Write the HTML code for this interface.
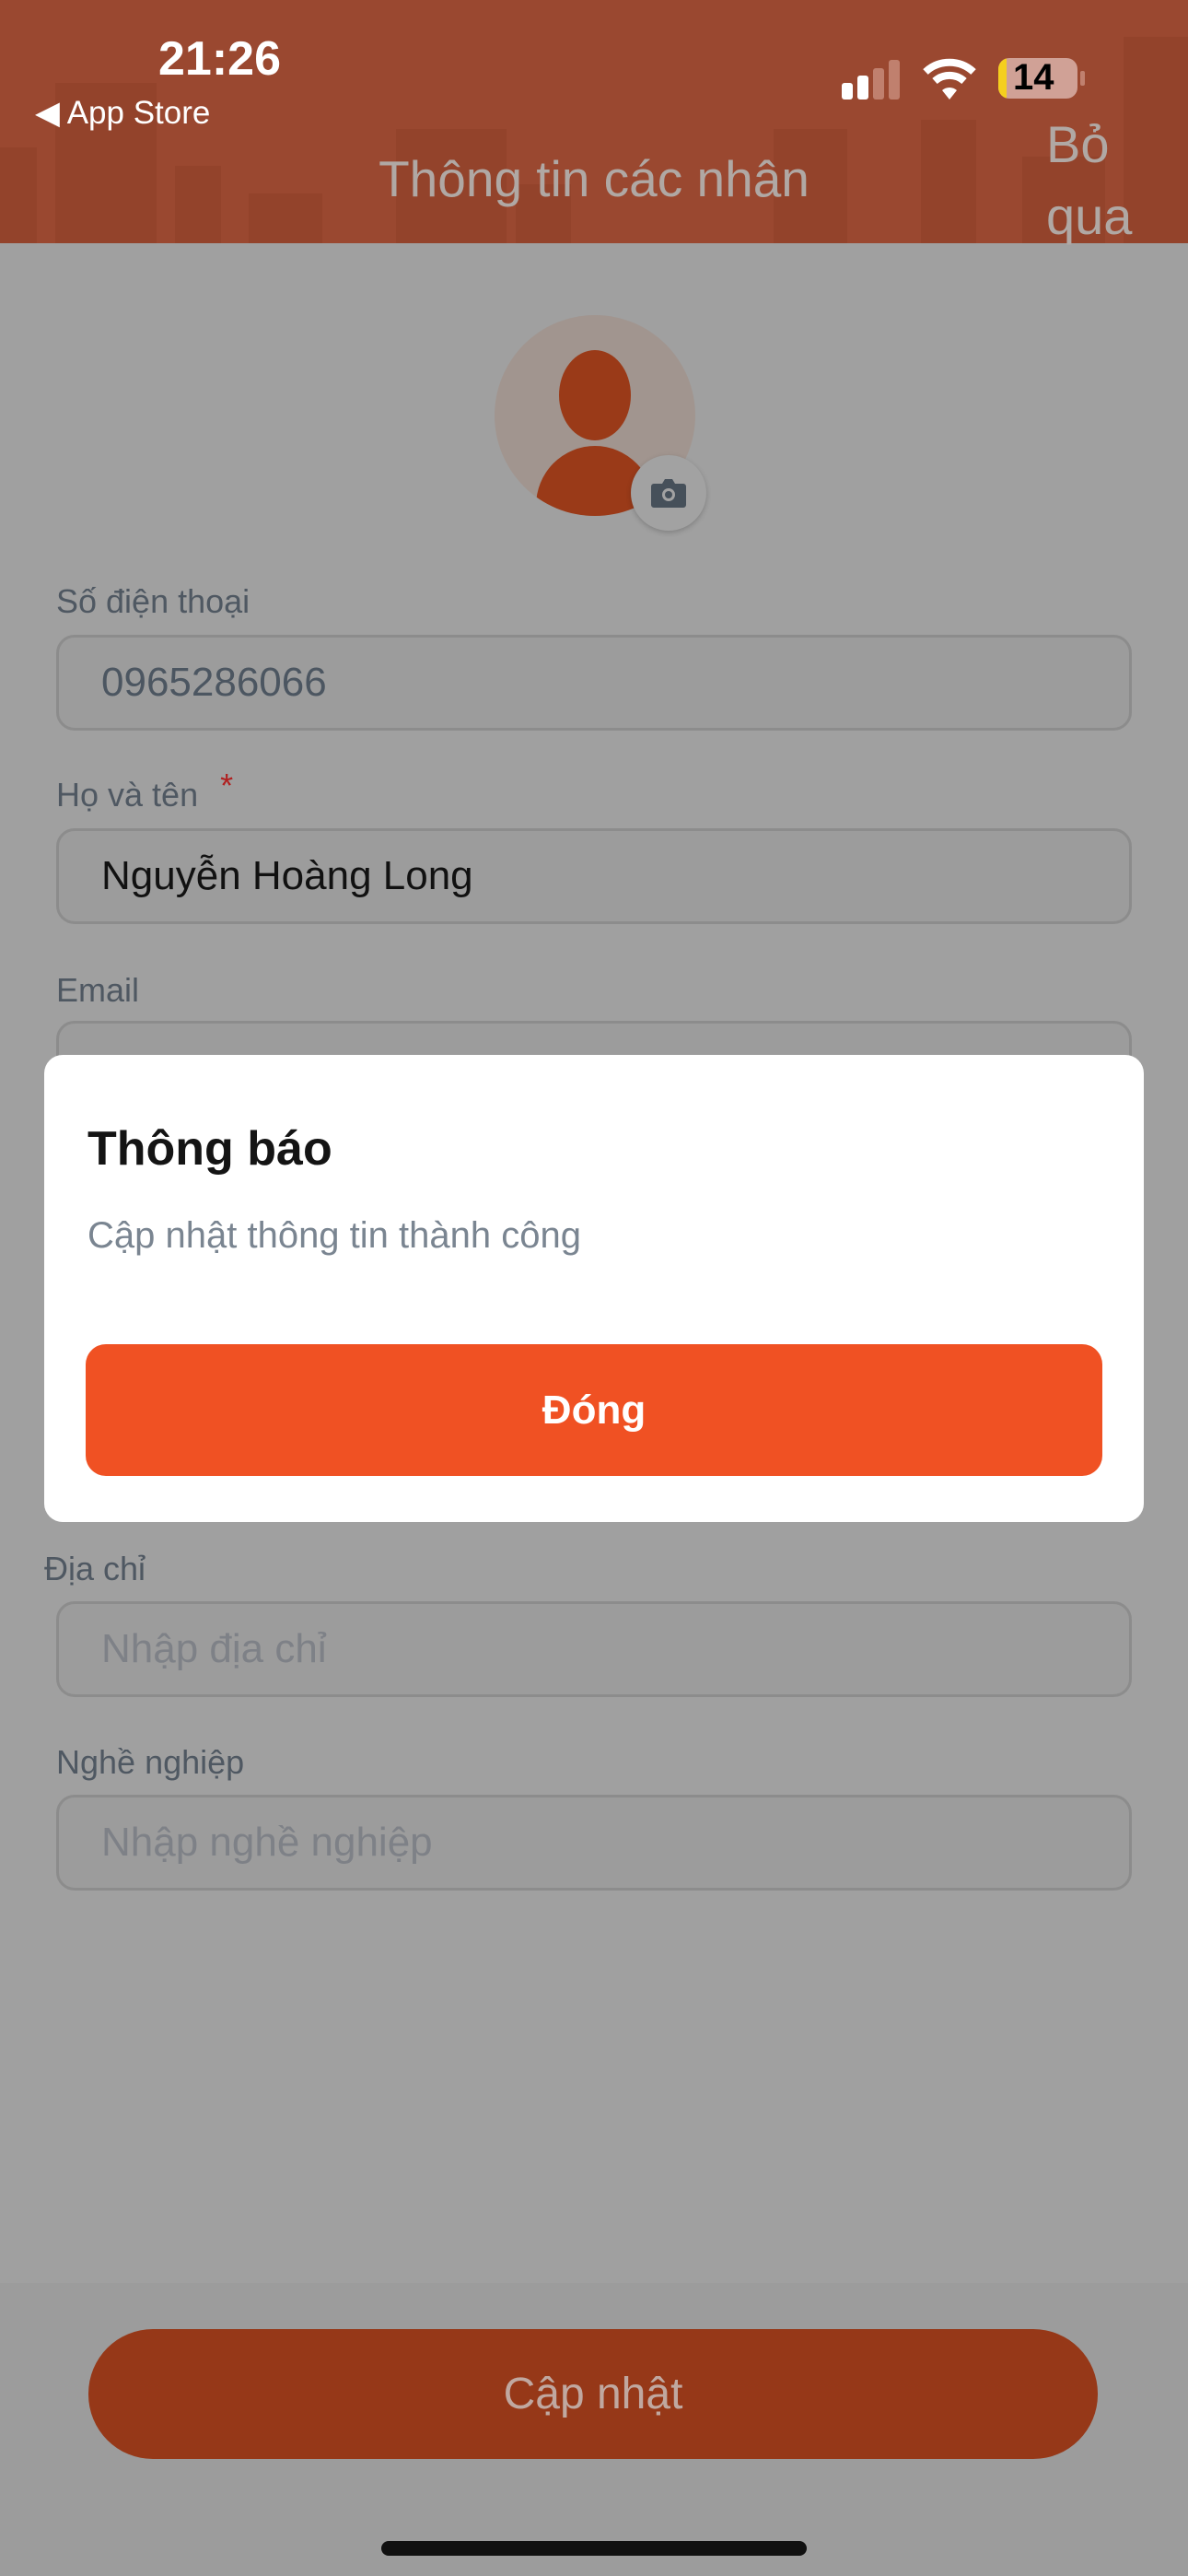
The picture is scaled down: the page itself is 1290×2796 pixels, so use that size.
<!DOCTYPE html>
<html><head><meta charset="utf-8"><style>
*{margin:0;padding:0;box-sizing:border-box}
body{width:1290px;height:2796px;background:#a0a0a0;position:relative;overflow:hidden;font-family:"Liberation Sans","DejaVu Sans",sans-serif}
.a{position:absolute;white-space:nowrap}
.hdr{position:absolute;left:0;top:0;width:1290px;height:264px;background:#9a4830}
.lbl{font-size:36px;color:#4f5862}
.inp{position:absolute;left:61px;width:1168px;height:104px;border:3px solid #8c8c8c;border-radius:20px;background:#9c9c9c}
.inp span{position:absolute;left:46px;top:50%;transform:translateY(-50%);font-size:44px;white-space:nowrap}
</style></head><body>
<div class="hdr">
 <svg width="1290" height="264" style="position:absolute;left:0;top:0" fill="#8f4129" opacity=".6">
  <rect x="0" y="160" width="40" height="104"/><rect x="60" y="90" width="110" height="174"/><rect x="190" y="180" width="50" height="84"/>
  <rect x="270" y="210" width="80" height="54"/><rect x="430" y="140" width="120" height="124"/><rect x="560" y="200" width="60" height="64"/>
  <rect x="840" y="140" width="80" height="124"/><rect x="1000" y="130" width="60" height="134"/><rect x="1110" y="170" width="90" height="94"/><rect x="1220" y="40" width="70" height="224"/>
 </svg>
 <div class="a" style="left:172px;top:34px;font-size:52px;font-weight:bold;color:#fff">21:26</div>
 <div class="a" style="left:38px;top:103px;font-size:35px;color:#fff">◀ App Store</div>
 <div style="position:absolute;left:914px;top:90px;width:12px;height:18px;background:#fff;border-radius:3px"></div>
 <div style="position:absolute;left:931px;top:82px;width:12px;height:26px;background:#fff;border-radius:3px"></div>
 <div style="position:absolute;left:948px;top:74px;width:12px;height:34px;background:#c0806e;border-radius:3px"></div>
 <div style="position:absolute;left:965px;top:65px;width:12px;height:43px;background:#c0806e;border-radius:3px"></div>
 <svg style="position:absolute;left:1002px;top:60px" width="58" height="50" viewBox="0 0 58 50"><path d="M3 18 A38 38 0 0 1 55 18" stroke="#fff" stroke-width="8" fill="none"/><path d="M13 28 A24 24 0 0 1 45 28" stroke="#fff" stroke-width="8" fill="none"/><path d="M21 38 L29 48 L37 38 A12 12 0 0 0 21 38Z" fill="#fff"/></svg>
 <div style="position:absolute;left:1084px;top:63px;width:86px;height:44px;border-radius:12px;background:#d0a196;overflow:hidden"><div style="width:9px;height:44px;background:#f5cf1e"></div></div>
 <div style="position:absolute;left:1173px;top:77px;width:5px;height:16px;background:#c0806e;border-radius:2px"></div>
 <div class="a" style="left:1100px;top:62px;font-size:40px;font-weight:bold;color:#000">14</div>
 <div class="a" style="left:0;width:1290px;text-align:center;top:162px;font-size:55px;color:#b0a8a4">Thông tin các nhân</div>
 <div class="a" style="left:1136px;top:124px;font-size:56px;color:#b0a8a4">Bỏ</div>
 <div class="a" style="left:1136px;top:202px;font-size:56px;color:#b0a8a4">qua</div>
</div>
<div style="position:absolute;left:537px;top:342px;width:218px;height:218px;border-radius:50%;background:#a1958f;overflow:hidden">
 <div style="position:absolute;left:70px;top:38px;width:78px;height:98px;border-radius:50%;background:#9a3a18"></div>
 <div style="position:absolute;left:45px;top:142px;width:128px;height:130px;border-radius:50%;background:#9a3a18"></div>
</div>
<div style="position:absolute;left:685px;top:494px;width:82px;height:82px;border-radius:50%;background:#a2a2a2;box-shadow:0 2px 6px rgba(0,0,0,.2)"></div>
<svg style="position:absolute;left:706px;top:517px" width="40" height="36" viewBox="0 0 40 36"><path d="M4 8h9l3-5h8l3 5h9a3 3 0 0 1 3 3v20a3 3 0 0 1-3 3H4a3 3 0 0 1-3-3V11a3 3 0 0 1 3-3z" fill="#46505a"/><circle cx="20" cy="20" r="7" fill="#a2a2a2"/><circle cx="20" cy="20" r="4" fill="#46505a"/></svg>

<div class="a lbl" style="left:61px;top:632px">Số điện thoại</div>
<div class="inp" style="top:689px"><span style="color:#4c5661">0965286066</span></div>
<div class="a lbl" style="left:61px;top:842px">Họ và tên <span style="color:#b02020;position:relative;top:-10px;margin-left:14px">*</span></div>
<div class="inp" style="top:899px"><span style="color:#111">Nguyễn Hoàng Long</span></div>
<div class="a lbl" style="left:61px;top:1054px">Email</div>
<div class="inp" style="top:1108px"></div>
<div class="a lbl" style="left:48px;top:1682px">Địa chỉ</div>
<div class="inp" style="top:1738px"><span style="color:#7e8187">Nhập địa chỉ</span></div>
<div class="a lbl" style="left:61px;top:1892px">Nghề nghiệp</div>
<div class="inp" style="top:1948px"><span style="color:#7e8187">Nhập nghề nghiệp</span></div>

<div style="position:absolute;left:0;top:2478px;width:1290px;height:318px;background:#9c9c9c"></div>
<div style="position:absolute;left:96px;top:2528px;width:1096px;height:141px;border-radius:70px;background:#963818;color:#c0a8a0;font-size:48px;text-align:center;line-height:141px">Cập nhật</div>
<div style="position:absolute;left:414px;top:2758px;width:462px;height:16px;border-radius:8px;background:#111"></div>

<div style="position:absolute;left:48px;top:1145px;width:1194px;height:507px;background:#fff;border-radius:20px">
 <div class="a" style="left:47px;top:72px;font-size:52px;font-weight:bold;color:#141414">Thông báo</div>
 <div class="a" style="left:47px;top:174px;font-size:40px;color:#7a8591">Cập nhật thông tin thành công</div>
 <div style="position:absolute;left:45px;top:314px;width:1104px;height:143px;border-radius:22px;background:#f05123;color:#fff;font-size:44px;font-weight:bold;text-align:center;line-height:143px">Đóng</div>
</div>
</body></html>
